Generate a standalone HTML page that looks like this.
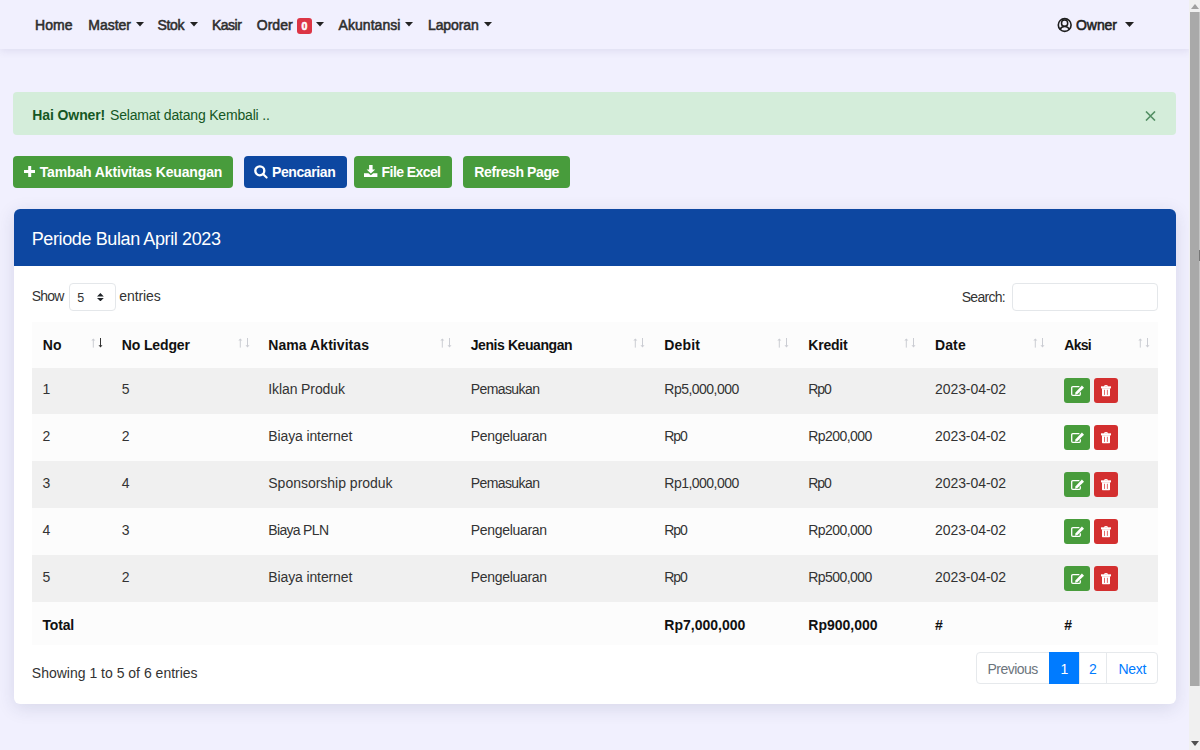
<!DOCTYPE html><html><head><meta charset="utf-8"><style>
html,body{margin:0;padding:0;width:1200px;height:750px;overflow:hidden;background:#f1f0fe;font-family:"Liberation Sans",sans-serif;}
.t{position:absolute;white-space:nowrap;}
.r{position:absolute;box-sizing:border-box;}
svg{position:absolute;}
</style></head><body>
<div class="r" style="left:0px;top:0px;width:1190px;height:49px;background:#f1f0fe;box-shadow:0 2px 8px rgba(60,50,120,0.10);"></div>
<div class="t" style="left:35.00px;top:18.40px;font-size:14px;line-height:14px;font-weight:400;color:#2e2e2e;letter-spacing:0.040px;-webkit-text-stroke:0.55px #2e2e2e;">Home</div>
<div class="t" style="left:88.30px;top:18.40px;font-size:14px;line-height:14px;font-weight:400;color:#2e2e2e;letter-spacing:-0.014px;-webkit-text-stroke:0.55px #2e2e2e;">Master</div>
<svg style="left:135.5px;top:22px" width="8.0" height="4.600000000000001" viewBox="0 0 8.0 4.600000000000001"><path d="M0 0H8.0L4.0 4.600000000000001Z" fill="#222"/></svg>
<div class="t" style="left:157.50px;top:18.40px;font-size:14px;line-height:14px;font-weight:400;color:#2e2e2e;letter-spacing:-0.323px;-webkit-text-stroke:0.55px #2e2e2e;">Stok</div>
<svg style="left:189.5px;top:22px" width="8.0" height="4.600000000000001" viewBox="0 0 8.0 4.600000000000001"><path d="M0 0H8.0L4.0 4.600000000000001Z" fill="#222"/></svg>
<div class="t" style="left:212.00px;top:18.40px;font-size:14px;line-height:14px;font-weight:400;color:#2e2e2e;letter-spacing:-0.505px;-webkit-text-stroke:0.55px #2e2e2e;">Kasir</div>
<div class="t" style="left:256.70px;top:18.40px;font-size:14px;line-height:14px;font-weight:400;color:#2e2e2e;letter-spacing:0.057px;-webkit-text-stroke:0.55px #2e2e2e;">Order</div>
<div class="r" style="left:297px;top:18px;width:15px;height:15.5px;background:#dc3545;border-radius:3px;"></div>
<div class="t" style="left:301.60px;top:20.95px;font-size:10.5px;line-height:10.5px;font-weight:700;color:#fff;letter-spacing:0.000px;-webkit-text-stroke:0.55px #fff;">0</div>
<svg style="left:315.5px;top:22px" width="8.0" height="4.600000000000001" viewBox="0 0 8.0 4.600000000000001"><path d="M0 0H8.0L4.0 4.600000000000001Z" fill="#222"/></svg>
<div class="t" style="left:338.50px;top:18.40px;font-size:14px;line-height:14px;font-weight:400;color:#2e2e2e;letter-spacing:0.055px;-webkit-text-stroke:0.55px #2e2e2e;">Akuntansi</div>
<svg style="left:405px;top:22px" width="8" height="4.600000000000001" viewBox="0 0 8 4.600000000000001"><path d="M0 0H8L4.0 4.600000000000001Z" fill="#222"/></svg>
<div class="t" style="left:428.00px;top:18.40px;font-size:14px;line-height:14px;font-weight:400;color:#2e2e2e;letter-spacing:-0.105px;-webkit-text-stroke:0.55px #2e2e2e;">Laporan</div>
<svg style="left:483.5px;top:22px" width="8.0" height="4.600000000000001" viewBox="0 0 8.0 4.600000000000001"><path d="M0 0H8.0L4.0 4.600000000000001Z" fill="#222"/></svg>
<svg style="left:1057px;top:17px" width="16" height="16" viewBox="0 0 16 16"><circle cx="7.7" cy="8" r="6.4" fill="none" stroke="#1e1e1e" stroke-width="1.6"/><circle cx="7.6" cy="6.2" r="3.1" fill="none" stroke="#1e1e1e" stroke-width="1.5"/><path d="M3.1 12.7C3.7 10.6 5.3 9.6 7.6 9.6S11.6 10.6 12.2 12.7" fill="none" stroke="#1e1e1e" stroke-width="1.5"/></svg>
<div class="t" style="left:1076.00px;top:17.50px;font-size:14px;line-height:14px;font-weight:400;color:#222;letter-spacing:-0.057px;-webkit-text-stroke:0.55px #222;">Owner</div>
<svg style="left:1125px;top:22px" width="9" height="5" viewBox="0 0 9 5"><path d="M0 0H9L4.5 5Z" fill="#222"/></svg>
<div class="r" style="left:13px;top:92px;width:1163px;height:42.5px;background:#d4edda;border-radius:4px;"></div>
<div class="t" style="left:32.30px;top:107.50px;font-size:14px;line-height:14px;font-weight:700;color:#155724;letter-spacing:-0.102px;">Hai Owner!</div>
<div class="t" style="left:110.00px;top:107.50px;font-size:14px;line-height:14px;font-weight:400;color:#155724;letter-spacing:-0.184px;">Selamat datang Kembali ..</div>
<svg style="left:1145px;top:110.5px" width="11" height="10" viewBox="0 0 11 10"><path d="M1 .5L10 9.5M10 .5L1 9.5" stroke="#528e63" stroke-width="1.6"/></svg>
<div class="r" style="left:13px;top:156px;width:220px;height:32px;background:#489c3c;border-radius:4px;"></div>
<svg style="left:23.8px;top:165.9px" width="11.4" height="11.1" viewBox="0 0 11.4 11.1"><path d="M4.2 0H7.2V4.05H11.4V7.05H7.2V11.1H4.2V7.05H0V4.05H4.2Z" fill="#fff"/></svg>
<div class="t" style="left:39.70px;top:165.20px;font-size:14px;line-height:14px;font-weight:700;color:#fff;letter-spacing:-0.134px;">Tambah Aktivitas Keuangan</div>
<div class="r" style="left:244px;top:156px;width:102.60000000000002px;height:32px;background:#0d47a1;border-radius:4px;"></div>
<svg style="left:254.3px;top:165.4px" width="14" height="14" viewBox="0 0 14 14"><circle cx="5.8" cy="5.8" r="4.5" fill="none" stroke="#fff" stroke-width="2.35"/><path d="M9 9L12.6 12.6" stroke="#fff" stroke-width="2.1" stroke-linecap="round"/></svg>
<div class="t" style="left:272.00px;top:165.20px;font-size:14px;line-height:14px;font-weight:700;color:#fff;letter-spacing:-0.403px;">Pencarian</div>
<div class="r" style="left:354px;top:156px;width:98px;height:32px;background:#489c3c;border-radius:4px;"></div>
<svg style="left:364.2px;top:164.8px" width="14" height="12" viewBox="0 0 14 12"><path d="M5.1 0H8.6V4.5H11.2L6.85 8.4L2.6 4.5H5.1Z" fill="#fff"/><path d="M0 8.2H4.4L6.85 10.3L9.3 8.2H13.4V12H0Z" fill="#fff"/></svg>
<div class="t" style="left:381.60px;top:165.20px;font-size:14px;line-height:14px;font-weight:700;color:#fff;letter-spacing:-0.579px;">File Excel</div>
<div class="r" style="left:463px;top:156px;width:106.5px;height:32px;background:#489c3c;border-radius:4px;"></div>
<div class="t" style="left:474.30px;top:165.20px;font-size:14px;line-height:14px;font-weight:700;color:#fff;letter-spacing:-0.405px;">Refresh Page</div>
<div class="r" style="left:13.5px;top:209px;width:1162.0px;height:494.5px;background:#fff;border-radius:6px;box-shadow:0 4px 18px rgba(40,50,95,0.13);overflow:hidden;"></div>
<div class="r" style="left:13.5px;top:209px;width:1162.0px;height:56.60000000000002px;background:#0d47a1;border-radius:6px 6px 0 0;"></div>
<div class="t" style="left:31.70px;top:229.80px;font-size:18px;line-height:18px;font-weight:400;color:#fff;letter-spacing:-0.386px;">Periode Bulan April 2023</div>
<div class="t" style="left:31.80px;top:289.00px;font-size:14px;line-height:14px;font-weight:400;color:#333;letter-spacing:-0.857px;">Show</div>
<div class="r" style="left:69.2px;top:283.1px;width:46.8px;height:27.799999999999955px;background:#fff;border:1px solid #e4e7ea;border-radius:4px;"></div>
<div class="t" style="left:77.20px;top:291.55px;font-size:12.5px;line-height:12.5px;font-weight:400;color:#333;letter-spacing:0.000px;">5</div>
<svg style="left:97.4px;top:293px" width="6.8" height="8.4" viewBox="0 0 6.8 8.4"><path d="M3.4 0L6.8 3.5H0Z M0 4.9H6.8L3.4 8.4Z" fill="#212529"/></svg>
<div class="t" style="left:119.30px;top:289.00px;font-size:14px;line-height:14px;font-weight:400;color:#333;letter-spacing:-0.100px;">entries</div>
<div class="t" style="left:961.70px;top:290.00px;font-size:14px;line-height:14px;font-weight:400;color:#333;letter-spacing:-0.705px;">Search:</div>
<div class="r" style="left:1011.7px;top:283.1px;width:146.0px;height:27.799999999999955px;background:#fff;border:1px solid #e4e7ea;border-radius:4px;"></div>
<div class="r" style="left:31.8px;top:322px;width:1125.9px;height:45.5px;background:#fcfcfc;"></div>
<div class="r" style="left:31.8px;top:367.5px;width:1125.9px;height:46.5px;background:#f0f0f0;"></div>
<div class="r" style="left:31.8px;top:414px;width:1125.9px;height:47px;background:#fcfcfc;"></div>
<div class="r" style="left:31.8px;top:461px;width:1125.9px;height:47px;background:#f0f0f0;"></div>
<div class="r" style="left:31.8px;top:508px;width:1125.9px;height:47px;background:#fcfcfc;"></div>
<div class="r" style="left:31.8px;top:555px;width:1125.9px;height:47.10000000000002px;background:#f0f0f0;"></div>
<div class="r" style="left:31.8px;top:602.1px;width:1125.9px;height:42.5px;background:#fcfcfc;"></div>
<div class="t" style="left:42.80px;top:338.00px;font-size:14px;line-height:14px;font-weight:700;color:#111;letter-spacing:0.000px;">No</div>
<div class="t" style="left:121.70px;top:338.00px;font-size:14px;line-height:14px;font-weight:700;color:#111;letter-spacing:-0.116px;">No Ledger</div>
<div class="t" style="left:268.30px;top:338.00px;font-size:14px;line-height:14px;font-weight:700;color:#111;letter-spacing:0.062px;">Nama Aktivitas</div>
<div class="t" style="left:470.70px;top:338.00px;font-size:14px;line-height:14px;font-weight:700;color:#111;letter-spacing:-0.414px;">Jenis Keuangan</div>
<div class="t" style="left:664.30px;top:338.00px;font-size:14px;line-height:14px;font-weight:700;color:#111;letter-spacing:0.175px;">Debit</div>
<div class="t" style="left:808.30px;top:338.00px;font-size:14px;line-height:14px;font-weight:700;color:#111;letter-spacing:-0.212px;">Kredit</div>
<div class="t" style="left:935.00px;top:338.00px;font-size:14px;line-height:14px;font-weight:700;color:#111;letter-spacing:0.107px;">Date</div>
<div class="t" style="left:1064.30px;top:338.00px;font-size:14px;line-height:14px;font-weight:700;color:#111;letter-spacing:-0.713px;">Aksi</div>
<svg style="left:90.8px;top:338px" width="12" height="10" viewBox="0 0 12 10"><path d="M2.3 9.6V1.2" stroke="#cbcdd3" stroke-width="1"/><path d="M2.3 .4L4.3 2.6H.3Z" fill="#cbcdd3"/><path d="M9.5 0V8.4" stroke="#333" stroke-width="1"/><path d="M9.5 9.4L11.5 7.2H7.5Z" fill="#333"/></svg>
<svg style="left:237.7px;top:338px" width="12" height="10" viewBox="0 0 12 10"><path d="M2.3 9.6V1.2" stroke="#cbcdd3" stroke-width="1"/><path d="M2.3 .4L4.3 2.6H.3Z" fill="#cbcdd3"/><path d="M9.5 0V8.4" stroke="#cbcdd3" stroke-width="1"/><path d="M9.5 9.4L11.5 7.2H7.5Z" fill="#cbcdd3"/></svg>
<svg style="left:440px;top:338px" width="12" height="10" viewBox="0 0 12 10"><path d="M2.3 9.6V1.2" stroke="#cbcdd3" stroke-width="1"/><path d="M2.3 .4L4.3 2.6H.3Z" fill="#cbcdd3"/><path d="M9.5 0V8.4" stroke="#cbcdd3" stroke-width="1"/><path d="M9.5 9.4L11.5 7.2H7.5Z" fill="#cbcdd3"/></svg>
<svg style="left:633.3px;top:338px" width="12" height="10" viewBox="0 0 12 10"><path d="M2.3 9.6V1.2" stroke="#cbcdd3" stroke-width="1"/><path d="M2.3 .4L4.3 2.6H.3Z" fill="#cbcdd3"/><path d="M9.5 0V8.4" stroke="#cbcdd3" stroke-width="1"/><path d="M9.5 9.4L11.5 7.2H7.5Z" fill="#cbcdd3"/></svg>
<svg style="left:777.3px;top:338px" width="12" height="10" viewBox="0 0 12 10"><path d="M2.3 9.6V1.2" stroke="#cbcdd3" stroke-width="1"/><path d="M2.3 .4L4.3 2.6H.3Z" fill="#cbcdd3"/><path d="M9.5 0V8.4" stroke="#cbcdd3" stroke-width="1"/><path d="M9.5 9.4L11.5 7.2H7.5Z" fill="#cbcdd3"/></svg>
<svg style="left:904.3px;top:338px" width="12" height="10" viewBox="0 0 12 10"><path d="M2.3 9.6V1.2" stroke="#cbcdd3" stroke-width="1"/><path d="M2.3 .4L4.3 2.6H.3Z" fill="#cbcdd3"/><path d="M9.5 0V8.4" stroke="#cbcdd3" stroke-width="1"/><path d="M9.5 9.4L11.5 7.2H7.5Z" fill="#cbcdd3"/></svg>
<svg style="left:1033.3px;top:338px" width="12" height="10" viewBox="0 0 12 10"><path d="M2.3 9.6V1.2" stroke="#cbcdd3" stroke-width="1"/><path d="M2.3 .4L4.3 2.6H.3Z" fill="#cbcdd3"/><path d="M9.5 0V8.4" stroke="#cbcdd3" stroke-width="1"/><path d="M9.5 9.4L11.5 7.2H7.5Z" fill="#cbcdd3"/></svg>
<svg style="left:1137.7px;top:338px" width="12" height="10" viewBox="0 0 12 10"><path d="M2.3 9.6V1.2" stroke="#cbcdd3" stroke-width="1"/><path d="M2.3 .4L4.3 2.6H.3Z" fill="#cbcdd3"/><path d="M9.5 0V8.4" stroke="#cbcdd3" stroke-width="1"/><path d="M9.5 9.4L11.5 7.2H7.5Z" fill="#cbcdd3"/></svg>
<div class="t" style="left:42.50px;top:382.00px;font-size:14px;line-height:14px;font-weight:400;color:#333;letter-spacing:0.000px;">1</div>
<div class="t" style="left:121.70px;top:382.00px;font-size:14px;line-height:14px;font-weight:400;color:#333;letter-spacing:0.000px;">5</div>
<div class="t" style="left:268.30px;top:382.00px;font-size:14px;line-height:14px;font-weight:400;color:#333;letter-spacing:-0.110px;">Iklan Produk</div>
<div class="t" style="left:470.70px;top:382.00px;font-size:14px;line-height:14px;font-weight:400;color:#333;letter-spacing:-0.577px;">Pemasukan</div>
<div class="t" style="left:664.30px;top:382.00px;font-size:14px;line-height:14px;font-weight:400;color:#333;letter-spacing:-0.515px;">Rp5,000,000</div>
<div class="t" style="left:808.30px;top:382.00px;font-size:14px;line-height:14px;font-weight:400;color:#333;letter-spacing:-1.145px;">Rp0</div>
<div class="t" style="left:935.00px;top:382.00px;font-size:14px;line-height:14px;font-weight:400;color:#333;letter-spacing:-0.068px;">2023-04-02</div>
<div class="r" style="left:1064.3px;top:378px;width:26.200000000000045px;height:25.399999999999977px;background:#489c3c;border-radius:3px;"></div>
<div class="r" style="left:1094.4px;top:378px;width:23.699999999999818px;height:25.399999999999977px;background:#d32f2f;border-radius:3px;"></div>
<svg style="left:1071px;top:384.8px" width="14" height="12" viewBox="0 -1 14 12"><path d="M8.4 .6H1.8Q.7 .6 .7 1.7V8.3Q.7 9.3 1.8 9.3H8.3Q9.3 9.3 9.3 8.3V6.2" fill="none" stroke="#fff" stroke-width="1.3"/><path d="M10.9 -.4L13 1.7L6.5 8.1L4 8.8L4.6 6.2Z" fill="#fff"/></svg>
<svg style="left:1101px;top:385.1px" width="10" height="11.5" viewBox="0 0 10 11.5"><path d="M2.9 1.8C3.1 .3 3.9 0 5 0S6.9 .3 7.1 1.8Z" fill="#fff"/><ellipse cx="5" cy="1.3" rx="1" ry=".55" fill="#e06060"/><path d="M0 1.3H10V3.4H0Z" fill="#fff"/><path d="M1 3.3H9V10.6Q9 11.3 8.3 11.3H1.7Q1 11.3 1 10.6Z" fill="#fff"/><path d="M3.5 4.8V9.9M6.4 4.8V9.9" stroke="#e05858" stroke-width=".9"/></svg>
<div class="t" style="left:42.50px;top:429.00px;font-size:14px;line-height:14px;font-weight:400;color:#333;letter-spacing:0.000px;">2</div>
<div class="t" style="left:121.70px;top:429.00px;font-size:14px;line-height:14px;font-weight:400;color:#333;letter-spacing:0.000px;">2</div>
<div class="t" style="left:268.30px;top:429.00px;font-size:14px;line-height:14px;font-weight:400;color:#333;letter-spacing:-0.124px;">Biaya internet</div>
<div class="t" style="left:470.70px;top:429.00px;font-size:14px;line-height:14px;font-weight:400;color:#333;letter-spacing:-0.308px;">Pengeluaran</div>
<div class="t" style="left:664.30px;top:429.00px;font-size:14px;line-height:14px;font-weight:400;color:#333;letter-spacing:-1.145px;">Rp0</div>
<div class="t" style="left:808.30px;top:429.00px;font-size:14px;line-height:14px;font-weight:400;color:#333;letter-spacing:-0.566px;">Rp200,000</div>
<div class="t" style="left:935.00px;top:429.00px;font-size:14px;line-height:14px;font-weight:400;color:#333;letter-spacing:-0.068px;">2023-04-02</div>
<div class="r" style="left:1064.3px;top:425px;width:26.200000000000045px;height:25.399999999999977px;background:#489c3c;border-radius:3px;"></div>
<div class="r" style="left:1094.4px;top:425px;width:23.699999999999818px;height:25.399999999999977px;background:#d32f2f;border-radius:3px;"></div>
<svg style="left:1071px;top:431.8px" width="14" height="12" viewBox="0 -1 14 12"><path d="M8.4 .6H1.8Q.7 .6 .7 1.7V8.3Q.7 9.3 1.8 9.3H8.3Q9.3 9.3 9.3 8.3V6.2" fill="none" stroke="#fff" stroke-width="1.3"/><path d="M10.9 -.4L13 1.7L6.5 8.1L4 8.8L4.6 6.2Z" fill="#fff"/></svg>
<svg style="left:1101px;top:432.1px" width="10" height="11.5" viewBox="0 0 10 11.5"><path d="M2.9 1.8C3.1 .3 3.9 0 5 0S6.9 .3 7.1 1.8Z" fill="#fff"/><ellipse cx="5" cy="1.3" rx="1" ry=".55" fill="#e06060"/><path d="M0 1.3H10V3.4H0Z" fill="#fff"/><path d="M1 3.3H9V10.6Q9 11.3 8.3 11.3H1.7Q1 11.3 1 10.6Z" fill="#fff"/><path d="M3.5 4.8V9.9M6.4 4.8V9.9" stroke="#e05858" stroke-width=".9"/></svg>
<div class="t" style="left:42.50px;top:476.00px;font-size:14px;line-height:14px;font-weight:400;color:#333;letter-spacing:0.000px;">3</div>
<div class="t" style="left:121.70px;top:476.00px;font-size:14px;line-height:14px;font-weight:400;color:#333;letter-spacing:0.000px;">4</div>
<div class="t" style="left:268.30px;top:476.00px;font-size:14px;line-height:14px;font-weight:400;color:#333;letter-spacing:-0.012px;">Sponsorship produk</div>
<div class="t" style="left:470.70px;top:476.00px;font-size:14px;line-height:14px;font-weight:400;color:#333;letter-spacing:-0.577px;">Pemasukan</div>
<div class="t" style="left:664.30px;top:476.00px;font-size:14px;line-height:14px;font-weight:400;color:#333;letter-spacing:-0.515px;">Rp1,000,000</div>
<div class="t" style="left:808.30px;top:476.00px;font-size:14px;line-height:14px;font-weight:400;color:#333;letter-spacing:-1.145px;">Rp0</div>
<div class="t" style="left:935.00px;top:476.00px;font-size:14px;line-height:14px;font-weight:400;color:#333;letter-spacing:-0.068px;">2023-04-02</div>
<div class="r" style="left:1064.3px;top:472px;width:26.200000000000045px;height:25.399999999999977px;background:#489c3c;border-radius:3px;"></div>
<div class="r" style="left:1094.4px;top:472px;width:23.699999999999818px;height:25.399999999999977px;background:#d32f2f;border-radius:3px;"></div>
<svg style="left:1071px;top:478.8px" width="14" height="12" viewBox="0 -1 14 12"><path d="M8.4 .6H1.8Q.7 .6 .7 1.7V8.3Q.7 9.3 1.8 9.3H8.3Q9.3 9.3 9.3 8.3V6.2" fill="none" stroke="#fff" stroke-width="1.3"/><path d="M10.9 -.4L13 1.7L6.5 8.1L4 8.8L4.6 6.2Z" fill="#fff"/></svg>
<svg style="left:1101px;top:479.1px" width="10" height="11.5" viewBox="0 0 10 11.5"><path d="M2.9 1.8C3.1 .3 3.9 0 5 0S6.9 .3 7.1 1.8Z" fill="#fff"/><ellipse cx="5" cy="1.3" rx="1" ry=".55" fill="#e06060"/><path d="M0 1.3H10V3.4H0Z" fill="#fff"/><path d="M1 3.3H9V10.6Q9 11.3 8.3 11.3H1.7Q1 11.3 1 10.6Z" fill="#fff"/><path d="M3.5 4.8V9.9M6.4 4.8V9.9" stroke="#e05858" stroke-width=".9"/></svg>
<div class="t" style="left:42.50px;top:523.00px;font-size:14px;line-height:14px;font-weight:400;color:#333;letter-spacing:0.000px;">4</div>
<div class="t" style="left:121.70px;top:523.00px;font-size:14px;line-height:14px;font-weight:400;color:#333;letter-spacing:0.000px;">3</div>
<div class="t" style="left:268.30px;top:523.00px;font-size:14px;line-height:14px;font-weight:400;color:#333;letter-spacing:-0.681px;">Biaya PLN</div>
<div class="t" style="left:470.70px;top:523.00px;font-size:14px;line-height:14px;font-weight:400;color:#333;letter-spacing:-0.308px;">Pengeluaran</div>
<div class="t" style="left:664.30px;top:523.00px;font-size:14px;line-height:14px;font-weight:400;color:#333;letter-spacing:-1.145px;">Rp0</div>
<div class="t" style="left:808.30px;top:523.00px;font-size:14px;line-height:14px;font-weight:400;color:#333;letter-spacing:-0.566px;">Rp200,000</div>
<div class="t" style="left:935.00px;top:523.00px;font-size:14px;line-height:14px;font-weight:400;color:#333;letter-spacing:-0.068px;">2023-04-02</div>
<div class="r" style="left:1064.3px;top:519px;width:26.200000000000045px;height:25.399999999999977px;background:#489c3c;border-radius:3px;"></div>
<div class="r" style="left:1094.4px;top:519px;width:23.699999999999818px;height:25.399999999999977px;background:#d32f2f;border-radius:3px;"></div>
<svg style="left:1071px;top:525.8px" width="14" height="12" viewBox="0 -1 14 12"><path d="M8.4 .6H1.8Q.7 .6 .7 1.7V8.3Q.7 9.3 1.8 9.3H8.3Q9.3 9.3 9.3 8.3V6.2" fill="none" stroke="#fff" stroke-width="1.3"/><path d="M10.9 -.4L13 1.7L6.5 8.1L4 8.8L4.6 6.2Z" fill="#fff"/></svg>
<svg style="left:1101px;top:526.1px" width="10" height="11.5" viewBox="0 0 10 11.5"><path d="M2.9 1.8C3.1 .3 3.9 0 5 0S6.9 .3 7.1 1.8Z" fill="#fff"/><ellipse cx="5" cy="1.3" rx="1" ry=".55" fill="#e06060"/><path d="M0 1.3H10V3.4H0Z" fill="#fff"/><path d="M1 3.3H9V10.6Q9 11.3 8.3 11.3H1.7Q1 11.3 1 10.6Z" fill="#fff"/><path d="M3.5 4.8V9.9M6.4 4.8V9.9" stroke="#e05858" stroke-width=".9"/></svg>
<div class="t" style="left:42.50px;top:570.00px;font-size:14px;line-height:14px;font-weight:400;color:#333;letter-spacing:0.000px;">5</div>
<div class="t" style="left:121.70px;top:570.00px;font-size:14px;line-height:14px;font-weight:400;color:#333;letter-spacing:0.000px;">2</div>
<div class="t" style="left:268.30px;top:570.00px;font-size:14px;line-height:14px;font-weight:400;color:#333;letter-spacing:-0.124px;">Biaya internet</div>
<div class="t" style="left:470.70px;top:570.00px;font-size:14px;line-height:14px;font-weight:400;color:#333;letter-spacing:-0.308px;">Pengeluaran</div>
<div class="t" style="left:664.30px;top:570.00px;font-size:14px;line-height:14px;font-weight:400;color:#333;letter-spacing:-1.145px;">Rp0</div>
<div class="t" style="left:808.30px;top:570.00px;font-size:14px;line-height:14px;font-weight:400;color:#333;letter-spacing:-0.566px;">Rp500,000</div>
<div class="t" style="left:935.00px;top:570.00px;font-size:14px;line-height:14px;font-weight:400;color:#333;letter-spacing:-0.068px;">2023-04-02</div>
<div class="r" style="left:1064.3px;top:566px;width:26.200000000000045px;height:25.399999999999977px;background:#489c3c;border-radius:3px;"></div>
<div class="r" style="left:1094.4px;top:566px;width:23.699999999999818px;height:25.399999999999977px;background:#d32f2f;border-radius:3px;"></div>
<svg style="left:1071px;top:572.8px" width="14" height="12" viewBox="0 -1 14 12"><path d="M8.4 .6H1.8Q.7 .6 .7 1.7V8.3Q.7 9.3 1.8 9.3H8.3Q9.3 9.3 9.3 8.3V6.2" fill="none" stroke="#fff" stroke-width="1.3"/><path d="M10.9 -.4L13 1.7L6.5 8.1L4 8.8L4.6 6.2Z" fill="#fff"/></svg>
<svg style="left:1101px;top:573.1px" width="10" height="11.5" viewBox="0 0 10 11.5"><path d="M2.9 1.8C3.1 .3 3.9 0 5 0S6.9 .3 7.1 1.8Z" fill="#fff"/><ellipse cx="5" cy="1.3" rx="1" ry=".55" fill="#e06060"/><path d="M0 1.3H10V3.4H0Z" fill="#fff"/><path d="M1 3.3H9V10.6Q9 11.3 8.3 11.3H1.7Q1 11.3 1 10.6Z" fill="#fff"/><path d="M3.5 4.8V9.9M6.4 4.8V9.9" stroke="#e05858" stroke-width=".9"/></svg>
<div class="t" style="left:42.50px;top:617.50px;font-size:14px;line-height:14px;font-weight:700;color:#111;letter-spacing:-0.177px;">Total</div>
<div class="t" style="left:664.30px;top:617.50px;font-size:14px;line-height:14px;font-weight:700;color:#111;letter-spacing:0.000px;">Rp7,000,000</div>
<div class="t" style="left:808.30px;top:617.50px;font-size:14px;line-height:14px;font-weight:700;color:#111;letter-spacing:0.000px;">Rp900,000</div>
<div class="t" style="left:935.00px;top:617.50px;font-size:14px;line-height:14px;font-weight:700;color:#111;letter-spacing:0.000px;">#</div>
<div class="t" style="left:1064.30px;top:617.50px;font-size:14px;line-height:14px;font-weight:700;color:#111;letter-spacing:0.000px;">#</div>
<div class="t" style="left:31.80px;top:666.40px;font-size:14px;line-height:14px;font-weight:400;color:#333;letter-spacing:0.002px;">Showing 1 to 5 of 6 entries</div>
<div class="r" style="left:975.8px;top:651.7px;width:182.0px;height:32.799999999999955px;background:#fff;border:1px solid #e6e9ec;border-radius:4px;"></div>
<div class="r" style="left:1049.2px;top:651.7px;width:29.59999999999991px;height:32.799999999999955px;background:#007bff;"></div>
<div class="r" style="left:1106px;top:652.7px;width:1px;height:30.799999999999955px;background:#e6e9ec;"></div>
<div class="r" style="left:1078.8px;top:652.7px;width:1.0px;height:30.799999999999955px;background:#e6e9ec;"></div>
<div class="t" style="left:987.50px;top:661.80px;font-size:14px;line-height:14px;font-weight:400;color:#6c757d;letter-spacing:-0.523px;">Previous</div>
<div class="t" style="left:1060.60px;top:661.80px;font-size:14px;line-height:14px;font-weight:400;color:#fff;letter-spacing:0.000px;">1</div>
<div class="t" style="left:1089.00px;top:661.80px;font-size:14px;line-height:14px;font-weight:400;color:#007bff;letter-spacing:0.000px;">2</div>
<div class="t" style="left:1118.50px;top:661.80px;font-size:14px;line-height:14px;font-weight:400;color:#007bff;letter-spacing:-0.323px;">Next</div>
<div class="r" style="left:1189px;top:0px;width:11px;height:750px;background:#f0f0f0;"></div>
<div class="r" style="left:1190px;top:12px;width:8.599999999999909px;height:674px;background:#a9a9a9;"></div>
<div class="r" style="left:1198.6px;top:12px;width:1.400000000000091px;height:674px;background:#c4c4c4;"></div>
<div class="r" style="left:1199px;top:250px;width:1px;height:11px;background:#777;"></div>
<svg style="left:1191px;top:4px" width="8" height="5" viewBox="0 0 8 5"><path d="M4 0L8 5H0Z" fill="#a0a0a0"/></svg>
<svg style="left:1191px;top:741px" width="8" height="5" viewBox="0 0 8 5"><path d="M0 0H8L4 5Z" fill="#505050"/></svg>
</body></html>
